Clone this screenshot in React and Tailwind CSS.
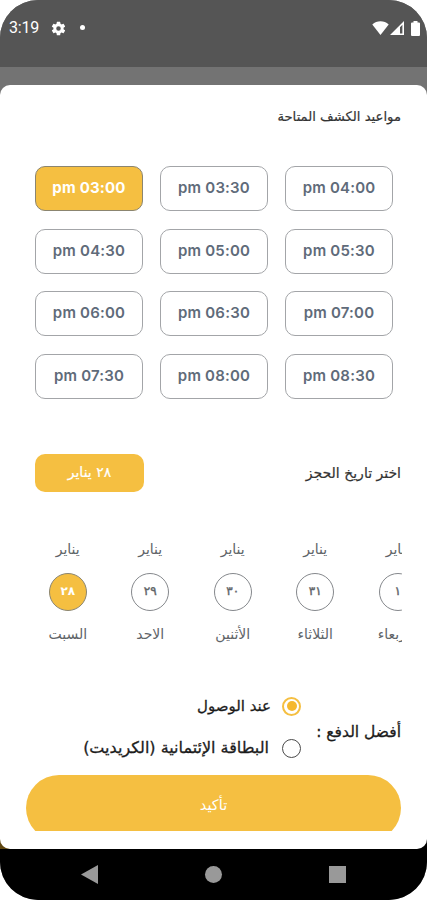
import React from 'react';

const times = ['03:00', '03:30', '04:00', '04:30', '05:00', '05:30', '06:00', '06:30', '07:00', '07:30', '08:00', '08:30'];

const days = [
    { number: '٢٨', name: 'السبت' },
    { number: '٢٩', name: 'الاحد' },
    { number: '٣٠', name: 'الأثنين' },
    { number: '٣١', name: 'الثلاثاء' },
    { number: '١', name: 'الأربعاء' },
];

const StatusBar = () => {
    return (
        <div className="flex h-[67px] items-start justify-between bg-[#555555] pl-[9px] pr-[7px] pt-[18px] text-white">
            <div className="flex h-[20px] items-center">
                <span className="w-[30px] whitespace-nowrap font-['Roboto'] text-[16px] leading-5 tracking-[-0.2px]">3:19</span>
                <svg className="ml-[11px] h-[17px] w-[17px]" viewBox="0 0 24 24" fill="currentColor">
                    <path d="M19.14 12.94c.04-.3.06-.61.06-.94s-.02-.64-.07-.94l2.03-1.58a.5.5 0 0 0 .12-.61l-1.92-3.32a.49.49 0 0 0-.59-.22l-2.39.96a7 7 0 0 0-1.62-.94l-.36-2.54a.48.48 0 0 0-.48-.41h-3.84a.47.47 0 0 0-.47.41l-.36 2.54c-.59.24-1.13.57-1.62.94l-2.39-.96a.48.48 0 0 0-.59.22L2.74 8.87a.47.47 0 0 0 .12.61l2.03 1.58a6 6 0 0 0-.02 1.88l-2.03 1.58a.5.5 0 0 0-.12.61l1.92 3.32c.12.22.37.29.59.22l2.39-.96c.5.38 1.03.7 1.62.94l.36 2.54c.05.24.24.41.48.41h3.84c.24 0 .44-.17.47-.41l.36-2.54a7 7 0 0 0 1.62-.94l2.39.96c.22.08.47 0 .59-.22l1.92-3.32a.47.47 0 0 0-.12-.61zM12 15.2a3.2 3.2 0 1 1 0-6.4 3.2 3.2 0 0 1 0 6.4z" />
                </svg>
                <span className="mb-[2px] ml-[13px] h-[5px] w-[5px] rounded-full bg-white" />
            </div>
            <div className="flex h-[20px] items-center">
                <svg className="h-[14px] w-[17px]" viewBox="0 0 17 14" fill="currentColor">
                    <path d="M0.3 3.5C4.8-.7 12.2-.7 16.7 3.5L8.5 14z" />
                </svg>
                <svg className="ml-px h-[14px] w-[14px]" viewBox="0 0 14 14" fill="currentColor">
                    <path fillRule="evenodd" d="M14 0v14H0zM12.4 3.8 10 6.2v6.3h2.4z" />
                </svg>
                <svg className="ml-[7px] h-[15px] w-[9px]" viewBox="0 0 9 15" fill="currentColor">
                    <path d="M2.5 0h4v1.6H8a1 1 0 0 1 1 1V14a1 1 0 0 1-1 1H1a1 1 0 0 1-1-1V2.6a1 1 0 0 1 1-1h1.5z" />
                </svg>
            </div>
        </div>
    );
}

const TimeSlots = () => {
    return (
        <div dir="ltr" className="mt-[34px] grid grid-cols-[108px_108px_108px] gap-x-[17px] gap-y-[17.5px] pl-[35px] font-['Inter'] text-[15px] font-semibold tracking-[0.2px]">
            {times.map((time, i) => (
                <div key={time} className={i === 0
                    ? 'flex h-[45px] items-center justify-center rounded-[10px] border border-[#8b8570] bg-[#f5bf41] font-bold text-white'
                    : 'flex h-[45px] items-center justify-center rounded-[10px] border border-[#a3a5a8] text-[#5f6b7a]'}>
                    pm {time}
                </div>
            ))}
        </div>
    );
}

const DayPicker = () => {
    return (
        <div dir="ltr" className="ml-[26.5px] mt-[45px] flex w-[375px] self-end overflow-hidden text-[#606468]">
            {days.map((day, i) => (
                <div key={day.number} className="flex w-[82.5px] shrink-0 flex-col items-center text-[14px] leading-6">
                    <span>يناير</span>
                    <div className={i === 0
                        ? 'mt-[12px] flex h-[38px] w-[38px] items-center justify-center rounded-full border border-[#8b8570] bg-[#f5bf41] pb-[2px] text-[12px] font-bold text-white'
                        : 'mt-[12px] flex h-[38px] w-[38px] items-center justify-center rounded-full border border-[#85888c] pb-[2px] text-[12px] [-webkit-text-stroke:0.4px]'}>
                        {day.number}
                    </div>
                    <span className="mt-[11px] whitespace-nowrap">{day.name}</span>
                </div>
            ))}
        </div>
    );
}

const Payment = () => {
    return (
        <div className="mt-[45px] flex h-[84px] shrink-0 pr-[26px] text-[15px] text-[#1c1c1c] [-webkit-text-stroke:0.3px]">
            <span className="mt-[26px] w-[100px] whitespace-nowrap text-[15.5px] leading-[30px]">أفضل الدفع :</span>
            <div className="flex flex-col gap-[12px]">
                <div className="flex h-[30px] items-center gap-[11px]">
                    <span className="flex h-[19px] w-[19px] items-center justify-center rounded-full border-2 border-[#f5bf41]">
                        <span className="h-[10px] w-[10px] rounded-full bg-[#f5b82e]" />
                    </span>
                    <span className="whitespace-nowrap">عند الوصول</span>
                </div>
                <div className="flex h-[30px] items-center gap-[13px]">
                    <span className="h-[19px] w-[19px] rounded-full border-[1.5px] border-[#4a4a4a]" />
                    <span className="whitespace-nowrap text-[16px]">البطاقة الإئتمانية (الكريديت)</span>
                </div>
            </div>
        </div>
    );
}

const NavBar = () => {
    return (
        <div className="flex h-[51px] items-start justify-between bg-black pl-[81px] pr-[81px] pt-[16px] text-[#999999]">
            <svg className="h-[19px] w-[17px]" viewBox="0 0 17 19" fill="currentColor">
                <path d="M0 9.5 17 0v19z" />
            </svg>
            <span className="mt-px h-[17px] w-[17px] rounded-full bg-[#999999]" />
            <span className="mt-px h-[17px] w-[17px] bg-[#999999]" />
        </div>
    );
}

const App = () => {
    return (
        <div className="h-[900px] w-[427px] overflow-hidden bg-white">
            <div className="h-[900px] w-[427px] overflow-hidden rounded-[38px] bg-[#737373] font-['DejaVu_Sans',sans-serif]">
                <StatusBar />
                <div className="bg-[linear-gradient(#737373_50%,transparent_50%),linear-gradient(to_right,#5e4610_50%,#000_50%)] pt-[18px]">
                    <div dir="rtl" className="flex h-[764px] flex-col overflow-hidden rounded-[10px] bg-white">
                        <h2 className="mt-[17px] pr-[26px] text-[13.2px] leading-[30px] text-[#333333] [-webkit-text-stroke:0.2px]">مواعيد الكشف المتاحة</h2>
                        <TimeSlots />
                        <div className="mt-[55.5px] flex h-[38px] shrink-0 items-center justify-between pl-[35px] pr-[26px] text-[14px] text-[#333333] [-webkit-text-stroke:0.2px]">
                            <span>اختر تاريخ الحجز</span>
                            <span className="flex h-[38px] w-[109px] items-center justify-center rounded-[10px] bg-[#f5bf41] pb-[2px] text-white">٢٨ يناير</span>
                        </div>
                        <DayPicker />
                        <Payment />
                        <div className="mx-[26px] flex h-[56px] shrink-0 justify-center overflow-hidden">
                            <button className="h-[66px] w-full shrink-0 rounded-full bg-[#f5bf41] pb-[4px] text-[14.5px] text-white">تأكيد</button>
                        </div>
                    </div>
                </div>
                <NavBar />
            </div>
        </div>
    );
}

export default App;
